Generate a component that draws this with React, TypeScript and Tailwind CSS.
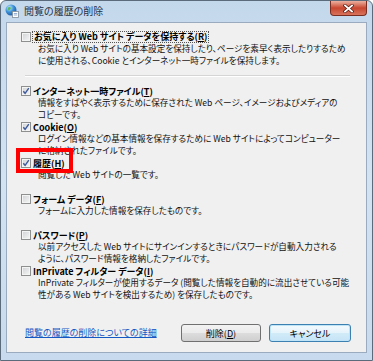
import React from 'react';

type Item = { label: string; key: string; lines: string[]; checked: boolean };

const items: Item[] = [
  { label: 'インターネット一時ファイル', key: 'T', checked: true, lines: ['情報をすばやく表示するために保存された Web ページ、イメージおよびメディアの', 'コピーです。'] },
  { label: 'Cookie', key: 'O', checked: true, lines: ['ログイン情報などの基本情報を保存するために Web サイトによってコンピューター', 'に格納されたファイルです。'] },
  { label: '履歴', key: 'H', checked: true, lines: ['閲覧した Web サイトの一覧です。'] },
  { label: 'フォーム データ', key: 'F', checked: false, lines: ['フォームに入力した情報を保存したものです。'] },
  { label: 'パスワード', key: 'P', checked: false, lines: ['以前アクセスした Web サイトにサインインするときにパスワードが自動入力される', 'ように、パスワード情報を格納したファイルです。'] },
  { label: 'InPrivate フィルター データ', key: 'I', checked: false, lines: ['InPrivate フィルターが使用するデータ (閲覧した情報を自動的に流出させている可能', '性がある Web サイトを検出するため) を保存したものです。'] },
];

function Box({ checked }: { checked: boolean }) {
  return (
    <span className="w-[10px] h-[10px] shrink-0 border border-[#8e8f8f] shadow-[inset_0_0_0_1px_#f4f4f4] bg-gradient-to-br from-[#cfd1d4] to-[#f7f7f7] flex items-center justify-center">
      {checked && (
        <svg width="8" height="8" viewBox="0 0 8 8">
          <path d="M1.3 4.2 L3.1 6.3 L6.8 1.2" fill="none" stroke="#3d5a9c" strokeWidth="1.4" />
        </svg>
      )}
    </span>
  );
}

function Block({ item }: { item: Item }) {
  return (
    <div className="h-[36px] pl-[14px]">
      <div className="h-[12px] flex items-center gap-[2px]">
        <Box checked={item.checked} />
        <span className="font-bold text-[9px] leading-[11px] text-black whitespace-nowrap">
          {item.label}(<span className="underline">{item.key}</span>)
        </span>
      </div>
      <div className="pl-[17px] text-[8.6px] leading-[11.5px] text-[#111]">
        {item.lines.map((l) => (
          <div key={l} className="whitespace-nowrap">
            {l}
          </div>
        ))}
      </div>
    </div>
  );
}

function Globe() {
  return (
    <svg width="14" height="14" viewBox="0 0 14 14">
      <defs>
        <radialGradient id="g" cx="0.35" cy="0.3" r="0.8">
          <stop offset="0" stopColor="#bfe8ff" />
          <stop offset="0.5" stopColor="#3a8fd6" />
          <stop offset="1" stopColor="#1c4f9a" />
        </radialGradient>
      </defs>
      <circle cx="6" cy="6" r="5.5" fill="url(#g)" />
      <path d="M3 3.5 Q5 2.5 6 4 Q5 6 3.5 6.5 Q2.5 5 3 3.5Z M7 7 Q9 6.5 10 8 Q8.5 10 7 9.5Z" fill="#5cb85c" />
      <rect x="7.5" y="7.5" width="6" height="6" fill="#fff" stroke="#7d8a99" strokeWidth="0.8" />
      <path d="M8.8 9.5 H12.2 M8.8 11 H12.2" stroke="#6b8fbf" strokeWidth="0.7" />
    </svg>
  );
}

export default function App() {
  return (
    <div className="w-[373px] h-[361px] relative overflow-hidden font-['Noto_Sans_CJK_JP',sans-serif] [font-feature-settings:'palt']">
      <div className="w-full h-full flex flex-col rounded-t-[6px] border border-[#5c6b7c] bg-gradient-to-b from-[#c4d8ec] via-[#d3e3f2] to-[#c8daed]">
        <div className="h-[21px] flex items-start shrink-0">
          <div className="flex items-center gap-[5px] pl-[4px] pt-[3px]">
            <Globe />
            <span className="text-[10px] text-[#26313f] leading-[14px]">閲覧の履歴の削除</span>
          </div>
          <div className="ml-auto mr-[5px] w-[37px] h-[15px] rounded-b-[4px] border border-t-0 border-[#7a2e22] bg-gradient-to-b from-[#eab0a0] via-[#c7452f] to-[#d9735b] flex items-center justify-center">
            <svg width="11" height="9" viewBox="0 0 11 9">
              <path d="M2 1.5 L9 7.5 M9 1.5 L2 7.5" stroke="#5a1a10" strokeWidth="3.2" strokeLinecap="square" />
              <path d="M2 1.5 L9 7.5 M9 1.5 L2 7.5" stroke="#ffffff" strokeWidth="1.8" strokeLinecap="square" />
            </svg>
          </div>
        </div>
        <div className="ml-[5px] w-[361px] h-[331px] border border-[#9aabbf] bg-[#f0f0f0] flex flex-col">
          <div className="pt-[8px]">
            <div className="h-[36px] pl-[14px]">
              <div className="h-[12px] flex items-center gap-[1px]">
                <Box checked={false} />
                <span className="font-bold text-[9px] leading-[10px] text-black border border-dotted border-[#555] px-px whitespace-nowrap">
                  お気に入り Web サイト データを保持する(<span className="underline">R</span>)
                </span>
              </div>
              <div className="pl-[17px] text-[8.6px] leading-[11.5px] text-[#111]">
                <div className="whitespace-nowrap">お気に入り Web サイトの基本設定を保持したり、ページを素早く表示したりするため</div>
                <div className="whitespace-nowrap">に使用される、Cookie とインターネット一時ファイルを保持します。</div>
              </div>
            </div>
            <div className="mt-[8px] ml-[18px] mr-[16px] h-[2px] border-t border-[#d5d5d5] border-b border-b-white" />
            <div className="mt-[8px]">
              {items.map((it) => (
                <Block key={it.key} item={it} />
              ))}
            </div>
          </div>
          <div className="mt-auto pb-[10px] pl-[18px] pr-[15px] flex items-center">
            <a className="text-[9px] text-[#1458c4] underline leading-[12px]">閲覧の履歴の削除についての詳細</a>
            <button className="ml-auto w-[80px] h-[18px] rounded-[3px] border border-[#707070] bg-[linear-gradient(#f2f2f2_0%,#ebebeb_49%,#dddddd_50%,#cfcfcf_100%)] text-[9px] text-black leading-none">
              削除(<span className="underline">D</span>)
            </button>
            <button className="ml-[8px] w-[82px] h-[18px] rounded-[3px] border border-[#3c7fb1] shadow-[inset_0_0_0_1px_#bfe4f8] bg-[linear-gradient(#f4fafd_0%,#e5f3fb_49%,#d3ebf8_50%,#c4e4f6_100%)] text-[9px] text-black leading-none">
              キャンセル
            </button>
          </div>
        </div>
      </div>
      <div className="absolute left-[16px] top-[148px] w-[57px] h-[25px] border-[4px] border-[#ff0000]" />
    </div>
  );
}
